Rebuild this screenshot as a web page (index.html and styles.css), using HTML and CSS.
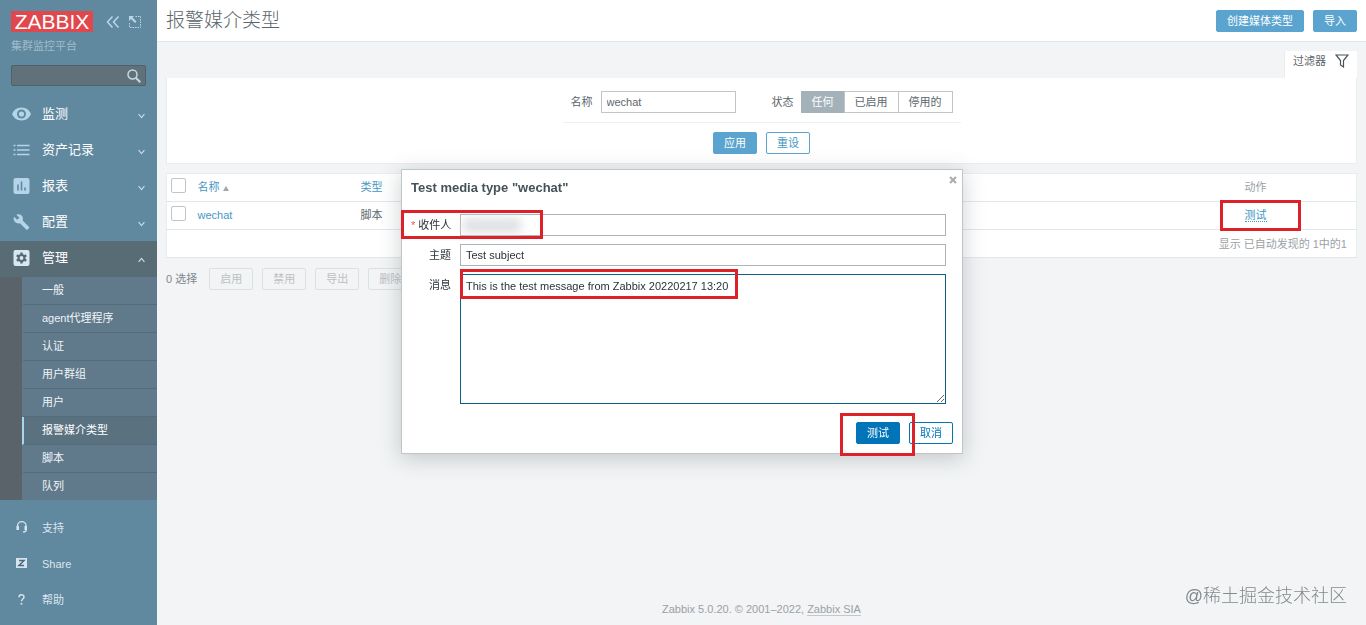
FILE: index.html
```html
<!DOCTYPE html>
<html lang="zh-CN">
<head>
    <meta charset="UTF-8">
    <meta name="viewport" content="width=device-width, initial-scale=1.0">
    <title>报警媒介类型</title>
    <link rel="stylesheet" href="styles.css">
</head>
<body>
    <aside class="sidebar">
        <div class="sidebar-header">
            <a class="logo" href="#">ZABBIX</a>
            <button class="icon-btn" type="button" aria-label="收起">
                <svg width="14" height="12" viewBox="0 0 14 12"><path d="M6.500 .5 1.500 6l5 5.500M12.500 .5 7.500 6l5 5.500" fill="none" stroke="#b9d7e8" stroke-width="1.500"/></svg>
            </button>
            <button class="icon-btn" type="button" aria-label="隐藏">
                <svg width="12" height="12" viewBox="0 0 12 12"><path d="M6.500 .5h5v11H.5v-5" fill="none" stroke="#b9d7e8" stroke-dasharray="1.500 1"/><path d="M0 0h5L3.500 1.500l4 4-1.500 1.500-4-4L0 5z" fill="#b9d7e8"/></svg>
            </button>
        </div>
        <div class="server-name">集群监控平台</div>
        <form class="search">
            <input type="text" aria-label="搜索">
            <button class="icon-btn" type="button" aria-label="搜索">
                <svg width="14" height="14" viewBox="0 0 14 14"><circle cx="5.500" cy="5.500" r="4.500" fill="none" stroke="#c4d9e4" stroke-width="1.500"/><path d="M9 9l4.300 4.300" stroke="#c4d9e4" stroke-width="2"/></svg>
            </button>
        </form>

        <nav>
            <ul class="menu">
                <li><a href="#">
                    <svg class="menu-icon" viewBox="0 0 20 20"><path d="M10 3.500C5.500 3.500 2 6.300.5 10 2 13.700 5.500 16.500 10 16.500s8-2.800 9.500-6.500C18 6.300 14.500 3.500 10 3.500z" fill="#b4d4e8"/><circle cx="10" cy="10" r="4.500" fill="#60889f"/><circle cx="10" cy="10" r="2.600" fill="#b4d4e8"/></svg>
                    <span>监测</span>
                    <svg class="chevron" viewBox="0 0 6 5"><path d="M.5.8 3 3.800 5.500.8"/></svg>
                </a></li>
                <li><a href="#">
                    <svg class="menu-icon" viewBox="0 0 20 20"><path d="M2 5.500h2M2 10h2M2 14.500h2M5.500 5.500H18M5.500 10H18M5.500 14.500H18" stroke="#b4d4e8" stroke-width="1.700"/></svg>
                    <span>资产记录</span>
                    <svg class="chevron" viewBox="0 0 6 5"><path d="M.5.8 3 3.800 5.500.8"/></svg>
                </a></li>
                <li><a href="#">
                    <svg class="menu-icon" viewBox="0 0 20 20"><rect x="2" y="2" width="16" height="16" rx="2" fill="#b4d4e8"/><path d="M6.500 8.500v6M10 5.500v9M13.500 11.500v3" stroke="#60889f" stroke-width="1.600"/></svg>
                    <span>报表</span>
                    <svg class="chevron" viewBox="0 0 6 5"><path d="M.5.8 3 3.800 5.500.8"/></svg>
                </a></li>
                <li><a href="#">
                    <svg class="menu-icon" viewBox="-2 -2 28 28"><path d="M22.700 19l-9.100-9.100c.9-2.300.4-5-1.500-6.900-2-2-5-2.400-7.400-1.300L9 6 6 9 1.600 4.700C.4 7.100.9 10.100 2.900 12.100c1.900 1.900 4.600 2.400 6.900 1.500l9.100 9.100c.4.4 1 .4 1.400 0l2.300-2.300c.5-.4.5-1.100.1-1.400z" fill="#b4d4e8"/></svg>
                    <span>配置</span>
                    <svg class="chevron" viewBox="0 0 6 5"><path d="M.5.8 3 3.800 5.500.8"/></svg>
                </a></li>
                <li class="is-open">
                    <a href="#">
                        <svg class="menu-icon" viewBox="0 0 20 20"><rect x="2" y="2" width="16" height="16" rx="2" fill="#d9e8f0"/><circle cx="10" cy="10" r="4" fill="#566a73"/><path d="M10 4.500v11M5.200 7.200l9.600 5.600M14.800 7.200l-9.600 5.600" stroke="#566a73" stroke-width="2.400"/><circle cx="10" cy="10" r="1.900" fill="#d9e8f0"/></svg>
                        <span>管理</span>
                        <svg class="chevron" viewBox="0 0 6 5"><path d="M.5 4.200 3 1.200l2.500 3"/></svg>
                    </a>
                    <ul class="submenu">
                        <li><a href="#">一般</a></li>
                        <li><a href="#">agent代理程序</a></li>
                        <li><a href="#">认证</a></li>
                        <li><a href="#">用户群组</a></li>
                        <li><a href="#">用户</a></li>
                        <li class="is-selected"><a href="#">报警媒介类型</a></li>
                        <li><a href="#">脚本</a></li>
                        <li><a href="#">队列</a></li>
                    </ul>
                </li>
            </ul>
            <ul class="menu menu-user">
                <li><a href="#">
                    <svg class="menu-icon" viewBox="0 0 20 20"><path d="M6 12V8a4.300 4.300 0 0 1 8.600 0v4c0 1.500-1 2-3 2" fill="none" stroke="#d5e5ee" stroke-width="1.300"/><path d="M5 8h2.500v4H5zM13 8h2.500v4H13z" fill="#d5e5ee"/></svg>
                    <span>支持</span>
                </a></li>
                <li><a href="#">
                    <svg class="menu-icon" viewBox="0 0 20 20"><rect x="4.500" y="4" width="11" height="10" fill="#d5e5ee"/><path d="M7.500 6.500h5l-5 5h5" fill="none" stroke="#486b80" stroke-width="1.500"/></svg>
                    <span>Share</span>
                </a></li>
                <li><a href="#">
                    <svg class="menu-icon" viewBox="0 0 20 20"><path d="M7.500 7.300C7.500 3.700 12.500 3.900 12.500 7c0 2-2.500 2-2.500 4.300" fill="none" stroke="#d5e5ee" stroke-width="1.500"/><circle cx="10" cy="13.700" r="1" fill="#d5e5ee"/></svg>
                    <span>帮助</span>
                </a></li>
            </ul>
        </nav>
    </aside>

    <div class="wrapper">
        <header class="page-header">
            <h1>报警媒介类型</h1>
            <button class="btn btn-light" type="button">创建媒体类型</button>
            <button class="btn btn-light" type="button">导入</button>
        </header>

        <main>
            <div class="filter-tab">
                <a href="#">过滤器
                    <svg width="14" height="14" viewBox="0 0 14 14"><path d="M1 1h12L8.500 6.500V13l-3-2V6.500z" fill="none" stroke="#4a5459" stroke-width="1.200"/></svg>
                </a>
            </div>
            <form class="filter">
                <div class="filter-fields">
                    <label for="filter-name">名称</label>
                    <input class="text-input" type="text" id="filter-name" value="wechat">
                    <span class="status-label" id="status-label">状态</span>
                    <div class="segmented" role="radiogroup" aria-labelledby="status-label">
                        <label><input type="radio" name="status" checked><span>任何</span></label>
                        <label><input type="radio" name="status"><span>已启用</span></label>
                        <label><input type="radio" name="status"><span>停用的</span></label>
                    </div>
                </div>
                <div class="filter-buttons">
                    <button class="btn btn-light" type="button">应用</button>
                    <button class="btn btn-light btn-alt" type="button">重设</button>
                </div>
            </form>

            <table class="list-table">
                <thead>
                    <tr>
                        <th class="col-check"><input type="checkbox" aria-label="全选"></th>
                        <th class="col-name"><a href="#">名称<span class="arrow-up"></span></a></th>
                        <th><a href="#">类型</a></th>
                        <th class="col-action">动作</th>
                    </tr>
                </thead>
                <tbody>
                    <tr>
                        <td class="col-check"><input type="checkbox" aria-label="wechat"></td>
                        <td class="col-name"><a href="#">wechat</a></td>
                        <td>脚本</td>
                        <td class="col-action"><a class="link-action" href="#">测试</a><span class="mark mark-action"></span></td>
                    </tr>
                </tbody>
                <tfoot>
                    <tr><td class="table-stats" colspan="4">显示 已自动发现的 1中的1</td></tr>
                </tfoot>
            </table>

            <div class="action-buttons">
                <span>0 选择</span>
                <button class="btn" type="button" disabled>启用</button>
                <button class="btn" type="button" disabled>禁用</button>
                <button class="btn" type="button" disabled>导出</button>
                <button class="btn" type="button" disabled>删除</button>
            </div>
        </main>

        <footer>Zabbix 5.0.20. © 2001–2022, <a href="#">Zabbix SIA</a></footer>
    </div>

    <div class="overlay">
        <div class="modal" role="dialog" aria-labelledby="modal-title">
            <div class="modal-header">
                <h2 id="modal-title">Test media type "wechat"</h2>
                <button class="icon-btn" type="button" aria-label="关闭">
                    <svg width="8" height="8" viewBox="0 0 8 8"><path d="M1 1l6 6M7 1 1 7" stroke="#a9afb2" stroke-width="2.200"/></svg>
                </button>
            </div>
            <form>
                <div class="form-row">
                    <label class="required" for="sendto">收件人</label>
                    <input class="text-input" type="text" id="sendto">
                    <span class="masked"></span>
                    <span class="mark mark-sendto"></span>
                </div>
                <div class="form-row">
                    <label for="subject">主题</label>
                    <input class="text-input" type="text" id="subject" value="Test subject">
                </div>
                <div class="form-row">
                    <label for="message">消息</label>
                    <textarea class="text-input" id="message">This is the test message from Zabbix 20220217 13:20</textarea>
                    <span class="mark mark-message"></span>
                </div>
                <div class="modal-footer">
                    <button class="btn" type="button">测试</button>
                    <button class="btn btn-alt" type="button">取消</button>
                    <span class="mark mark-submit"></span>
                </div>
            </form>
        </div>
    </div>

    <div class="watermark">@稀土掘金技术社区</div>
</body>
</html>
```
FILE: styles.css
```css
* {
    box-sizing: border-box;
}
body {
    margin: 0;
    display: flex;
    min-height: 100vh;
    background-color: #f2f4f5;
    color: #5b666b;
    font-family: "Liberation Sans", Arial, "Noto Sans CJK SC", sans-serif;
    font-size: 11px;
    line-height: 16px;
}
ul {
    list-style: none;
    margin: 0;
    padding: 0;
}
a {
    color: #4796c4;
    text-decoration: none;
}
input, button, textarea {
    font: inherit;
    color: inherit;
}
svg {
    display: block;
    flex: none;
}
.icon-btn {
    display: block;
    padding: 0;
    border: none;
    background: none;
    cursor: pointer;
}

/* Sidebar */
.sidebar {
    flex: none;
    width: 157px;
    background-color: #60889f;
    color: #fff;
}
.sidebar-header {
    display: flex;
    align-items: center;
    gap: 9px;
    padding: 11px 11px 0;
}
.logo {
    width: 82px;
    margin-right: 4px;
    background-color: #e0484d;
    color: #fff;
    font-size: 21px;
    line-height: 21px;
    text-align: center;
}
.server-name {
    padding: 6px 11px 0;
    color: #a0bccb;
}
.search {
    display: flex;
    align-items: center;
    height: 21px;
    margin: 11px;
    padding-right: 4px;
    border: 1px solid #4d626c;
    border-radius: 2px;
    background-color: #60717a;
}
.search input {
    flex: 1;
    min-width: 0;
    border: none;
    background: none;
    outline: none;
}
.menu > li > a {
    display: flex;
    align-items: center;
    height: 36px;
    padding: 0 12px 2px 11px;
    color: #fff;
    font-size: 13px;
}
.menu > li > a span {
    flex: 1;
    margin-left: 10px;
}
.menu-icon {
    width: 21px;
    height: 20px;
}
.chevron {
    width: 7px;
    height: 6px;
    margin-top: 3px;
    fill: none;
    stroke: #c7dbe6;
}
.menu > .is-open > a {
    background-color: #586c76;
}
.submenu {
    border-left: 22px solid #596369;
    background-color: #60798b;
}
.submenu li {
    border-bottom: 1px solid #526c7c;
    border-left: 2px solid transparent;
}
.submenu li:last-child {
    border-bottom: none;
}
.submenu a {
    display: block;
    padding: 5px 18px 6px;
    color: #eff5f8;
}
.submenu .is-selected {
    border-left-color: #a8d5ef;
    background-color: #5a7280;
}
.submenu .is-selected a {
    color: #fff;
}
.menu-user {
    padding-top: 11px;
}
.menu-user > li > a {
    color: #d9e6ee;
    font-size: 11px;
}

/* Page */
.wrapper {
    flex: 1;
    min-width: 0;
    display: flex;
    flex-direction: column;
}
.page-header {
    display: flex;
    align-items: center;
    gap: 9px;
    height: 42px;
    padding: 0 9px;
    background-color: #fff;
    border-bottom: 1px solid #e2e6e8;
}
h1 {
    flex: 1;
    margin: 0;
    font-size: 19px;
    font-weight: 300;
    line-height: 24px;
}
main {
    padding: 9px 9px 0;
}
.btn {
    height: 22px;
    padding: 0 10px;
    border: 1px solid #0275b8;
    border-radius: 2px;
    background-color: #0275b8;
    color: #fff;
    line-height: 20px;
    cursor: pointer;
}
.btn-light {
    border-color: #5ba4cf;
    background-color: #5ba4cf;
}
.btn-alt {
    background-color: #fff;
    color: #0275b8;
}
.btn-light.btn-alt {
    color: #4796c4;
}
.btn:disabled {
    border-color: #dde0e1;
    background-color: transparent;
    color: #bcc1c4;
    cursor: default;
}
.text-input {
    height: 22px;
    padding: 0 5px;
    border: 1px solid #adb3b7;
    border-radius: 0;
    background-color: #fff;
    outline: none;
}
.filter .text-input {
    border-color: #c0c5c8;
}
.filter-tab {
    display: flex;
    justify-content: flex-end;
}
.filter-tab a {
    display: flex;
    align-items: center;
    gap: 9px;
    height: 27px;
    padding: 0 8px 7px;
    border-left: 1px solid #eaedee;
    background-color: #fff;
    color: #5b666b;
}
.filter {
    display: flex;
    flex-direction: column;
    align-items: center;
    padding: 13px 0 9px;
    border: 1px solid #eaedee;
    border-top: none;
    background-color: #fff;
}
.filter-fields {
    display: flex;
    align-items: center;
    gap: 8px;
    padding: 0 8px 9px;
    border-bottom: 1px solid #edf0f1;
}
.filter-fields .text-input {
    width: 135px;
}
.status-label {
    margin-left: 28px;
}
.segmented {
    display: flex;
}
.segmented label {
    position: relative;
    margin-left: -1px;
}
.segmented input {
    position: absolute;
    opacity: 0;
}
.segmented span {
    display: block;
    height: 22px;
    padding: 0 10px;
    border: 1px solid #c0c5c8;
    line-height: 20px;
}
.segmented input:checked + span {
    border-color: #a3b1b9;
    background-color: #a3b1b9;
    color: #fff;
}
.filter-buttons {
    display: flex;
    gap: 9px;
    margin-top: 9px;
}

/* List */
.list-table {
    width: 100%;
    margin-top: 9px;
    border: 1px solid #eaedee;
    border-collapse: collapse;
    background-color: #fff;
    table-layout: fixed;
}
.list-table th,
.list-table td {
    height: 28px;
    padding: 0 7px 2px;
    border-bottom: 1px solid #e3e7e9;
    font-weight: normal;
    text-align: left;
}
.list-table .col-check {
    width: 24px;
    padding: 0 4px 2px;
}
.col-check input {
    appearance: none;
    display: block;
    width: 15px;
    height: 15px;
    margin: 0 0 2px;
    border: 1px solid #c0c5c8;
    border-radius: 2px;
    background-color: #fff;
}
.col-name {
    width: 163px;
}
.arrow-up {
    display: inline-block;
    margin-left: 3px;
    border: 3px solid transparent;
    border-top: none;
    border-bottom: 5px solid #a0a6a9;
}
.list-table .col-action {
    position: relative;
    width: 119px;
}
th.col-action {
    color: #9aa1a5;
}
.link-action {
    border-bottom: 1px dotted #4796c4;
}
.list-table .table-stats {
    padding: 0 9px 0 0;
    color: #9aa1a5;
    text-align: right;
}
.action-buttons {
    display: flex;
    align-items: center;
    gap: 9px;
    margin-top: 10px;
    color: #7f888c;
}
.action-buttons span {
    margin-right: 3px;
}
footer {
    margin-top: auto;
    padding: 0 0 8px;
    color: #9aa1a5;
    text-align: center;
}
footer a {
    border-bottom: 1px solid #c3c8ca;
    color: #9aa1a5;
}

/* Dialog */
.overlay {
    position: fixed;
    inset: 0;
    display: flex;
    align-items: flex-start;
    justify-content: center;
    padding: 27vh 2px 0 0;
}
.modal {
    width: 562px;
    padding: 10px 9px 9px;
    border: 1px solid #c0c5c8;
    background-color: #fff;
    box-shadow: 0 4px 20px rgba(50, 65, 75, 0.25);
    color: #2b3338;
}
.modal-header {
    display: flex;
    align-items: flex-start;
    justify-content: space-between;
    margin-bottom: 18px;
}
.modal-header .icon-btn {
    margin: -4px -4px 0 0;
}
h2 {
    margin: 0;
    color: #455259;
    font-size: 13px;
    line-height: 16px;
}
.form-row {
    position: relative;
    display: flex;
    gap: 9px;
    margin-bottom: 8px;
    padding-right: 7px;
}
.form-row label {
    width: 40px;
    padding-top: 3px;
    text-align: right;
    white-space: nowrap;
}
.form-row .text-input {
    flex: 1;
    min-width: 0;
}
.form-row textarea {
    height: 130px;
    padding: 3px 5px;
    border-color: #0f6089;
    resize: both;
}
.required::before {
    content: "* ";
    color: #e45959;
}
.masked {
    position: absolute;
    top: 4px;
    left: 52px;
    width: 58px;
    height: 15px;
    background-color: #dfe2e3;
    filter: blur(5px);
}
.modal-footer {
    position: relative;
    display: flex;
    justify-content: flex-end;
    gap: 9px;
    margin-top: 18px;
}

/* Highlight frames */
.mark {
    position: absolute;
    border: 3px solid #dc2228;
    pointer-events: none;
}
.mark-action {
    top: -2px;
    left: -18px;
    width: 81px;
    height: 31px;
}
.mark-sendto {
    top: -4px;
    left: -10px;
    width: 142px;
    height: 29px;
}
.mark-message {
    top: -5px;
    left: 49px;
    width: 278px;
    height: 30px;
}
.mark-submit {
    top: -9px;
    right: 38px;
    width: 75px;
    height: 43px;
}
.watermark {
    position: fixed;
    right: 19px;
    bottom: 16px;
    color: #83898c;
    font-size: 18px;
    font-weight: 300;
    line-height: 26px;
}
```
